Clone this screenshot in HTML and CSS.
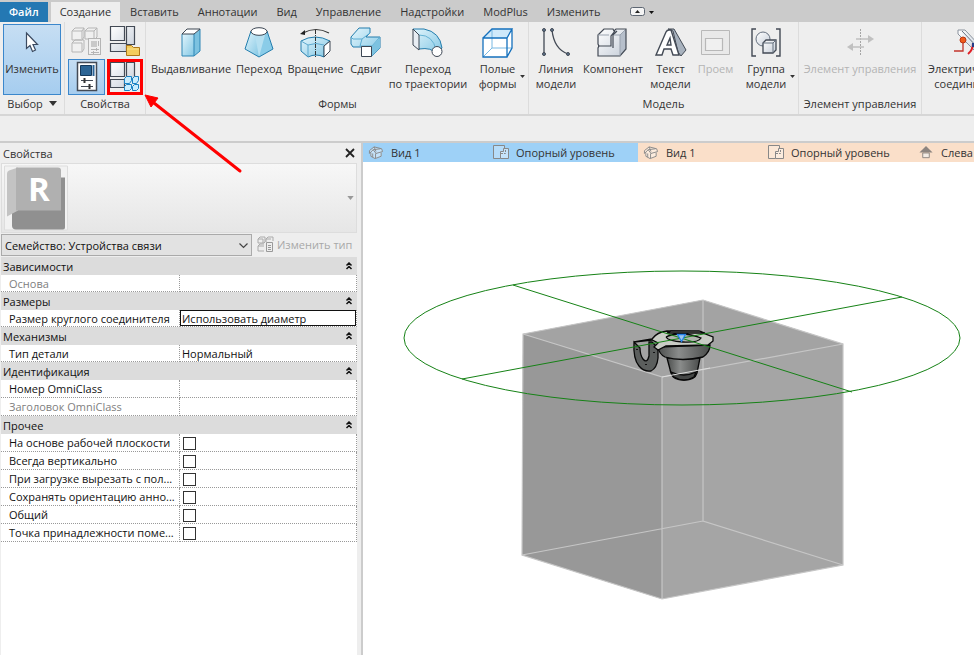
FILE: index.html
```html
<!DOCTYPE html>
<html lang="ru">
<head>
<meta charset="utf-8">
<title>Редактор семейств</title>
<link rel="stylesheet" href="styles.css">
</head>
<body>
<svg class="defs" aria-hidden="true">
  <defs>
    <linearGradient id="blue" x1="0" y1="0" x2="1" y2="1"><stop offset="0" stop-color="#e2f5fc"/><stop offset="1" stop-color="#83c7e4"/></linearGradient>
    <linearGradient id="grey" x1="0" y1="0" x2="1" y2="1"><stop offset="0" stop-color="#ffffff"/><stop offset="1" stop-color="#c6ced9"/></linearGradient>
    <linearGradient id="dome" x1="0" y1="0" x2="1" y2="0"><stop offset="0" stop-color="#4c4e4d"/><stop offset=".4" stop-color="#8a8c8b"/><stop offset="1" stop-color="#4a4c4b"/></linearGradient>
    <symbol id="house" viewBox="0 0 16 16"><path d="M1 6l5-4 8 2 1 3-1 1v4l-7 3-5-3V8z" fill="#fff" fill-opacity=".4"/><path d="M1 6l5-4 8 2 1 3-7 2-3-4-4 4zM2.500 8v4L7 14.500l6.500-2.500V8M7.500 9v5M4.500 9v4M6 2l2 5M5 5l8-1" fill="none" stroke="currentColor"/></symbol>
    <symbol id="plan" viewBox="0 0 16 15"><path d="M7.500 13.500h-7V.500h11v3" fill="#fff" fill-opacity=".25" stroke="currentColor"/><path d="M7.500 6.500h3v-3h5v10h-8z" fill="#fff" fill-opacity=".4" stroke="currentColor"/><path d="M8 8.500h4.500V4" fill="none" stroke="currentColor" stroke-dasharray="2 1"/></symbol>
    <symbol id="chevrons" viewBox="0 0 8 8"><path d="M1.500 3.500L4 1l2.500 2.500M1.500 7L4 4.500 6.500 7" fill="none" stroke="#111" stroke-width="1.500"/></symbol>
    <symbol id="down" viewBox="0 0 8 5"><path d="M0 0h8L4 5z" fill="currentColor"/></symbol>
  </defs>
</svg>

<div class="app">
  <nav class="menu">
    <button class="menu-tab file">Файл</button>
    <button class="menu-tab active">Создание</button>
    <button class="menu-tab">Вставить</button>
    <button class="menu-tab">Аннотации</button>
    <button class="menu-tab">Вид</button>
    <button class="menu-tab">Управление</button>
    <button class="menu-tab">Надстройки</button>
    <button class="menu-tab">ModPlus</button>
    <button class="menu-tab">Изменить</button>
    <button class="menu-toggle" aria-label="Свернуть ленту">
      <svg width="24" height="10" viewBox="0 0 24 10"><rect x=".5" y=".5" width="14" height="8" rx="2" fill="#f4f4f4" stroke="#5d6672"/><path d="M5 6h5L7.500 3z" fill="#222"/><path d="M19 4h5l-2.500 3z" fill="#111"/></svg>
    </button>
  </nav>

  <div class="ribbon">
    <section class="panel select">
      <div class="tools">
        <button class="tool pressed">
          <svg class="icon" viewBox="0 0 32 32"><path d="M10.500 6v15.500l3.500-3 2.500 6 3-1.500-2.500-5.500h4.500z" fill="#fff" stroke="#3b4a60" stroke-width="1.200"/></svg>
          <span>Изменить</span>
        </button>
      </div>
      <h2 class="panel-title">Выбор <svg class="title-arrow"><use href="#down"/></svg></h2>
    </section>

    <section class="panel props">
      <div class="tools">
        <button class="small" aria-label="Свойства типа" disabled>
          <svg class="icon" viewBox="0 0 32 32"><g fill="#f0f0f0" stroke="#b5b5b5"><path d="M1 6l3-3h9v9l-2 3H1zM14 6l3-3h9v9l-2 2H14zM1 18l3-3h9v9l-2 3H1z"/><path d="M1 6h10v9M11 6l2-3M14 6h9v8M23 6l3-3M1 18h10v9"/><rect x="17.500" y="13.500" width="12" height="16"/></g><path d="M20 16h6v6h-6z" fill="#c9c9c9"/><path d="M20 24.500h8M20 27.500h8M25.500 23v3M22.500 26v3M27.500 16v5" stroke="#b5b5b5"/></svg>
        </button>
        <button class="small" aria-label="Категория и параметры семейства">
          <svg class="icon" viewBox="0 0 32 32"><g fill="url(#grey)" stroke="#434a55" stroke-width="1.200"><path d="M1.500 1.500h14v14h-14zM17.500 1.500h8v18h-8zM1.500 18.500h16v8h-16z"/></g><path d="M17.500 20.500h5l2 2h6v8h-13z" fill="#f3cc5c" stroke="#ad7718"/><path d="M18 24h12" stroke="#fbe18d"/></svg>
        </button>
        <button class="small pressed" aria-label="Свойства">
          <svg class="icon" viewBox="0 0 32 32"><rect x="6.500" y="1.500" width="19" height="28" fill="#fff" stroke="#434a55" stroke-width="1.500"/><path d="M9.500 4.500h11v10h-11z" fill="#2c6494" stroke="#15385a"/><path d="M22.500 4v11" stroke="#2a6499" stroke-width="2"/><path d="M10 19.500h12M10 25.500h12" stroke="#434a55"/><path d="M13.500 17v5M18.500 23v5" stroke="#333" stroke-width="2"/></svg>
        </button>
        <button class="small marked" aria-label="Типоразмеры в семействе">
          <svg class="icon" viewBox="0 0 32 32"><g fill="url(#grey)" stroke="#434a55" stroke-width="1.200"><path d="M1.500 1.500h14v14h-14zM17.500 1.500h8v16h-8zM1.500 18.500h14v8h-14z"/></g><g fill="#c9ecfd" stroke="#1781c4"><path d="M15.500 17.500l2-2h5v4l-2 3h-5zM23.500 17.500l2-2h4v4l-2 3h-4zM15.500 25.500l2-2h5v4l-2 2h-5zM23.500 25.500l2-2h4v4l-2 2h-4z"/></g></svg>
        </button>
      </div>
      <h2 class="panel-title">Свойства</h2>
    </section>

    <section class="panel forms">
      <div class="tools">
        <button class="tool">
          <svg class="icon" viewBox="0 0 32 32"><path d="M7 7h12v22H7z" fill="url(#blue)"/><path d="M19 7l6-5v22l-6 5z" fill="#7cc2e0"/><path d="M7 7l5-5h13l-6 5z" fill="#fff"/><path d="M7 7v22h12l6-5V2M19 7v22" fill="none" stroke="#2e86b5"/><path d="M7 7l5-5h13l-6 5z" fill="none" stroke="#3c4653"/></svg>
          <span>Выдавливание</span>
        </button>
        <button class="tool">
          <svg class="icon" viewBox="0 0 32 32"><path d="M8 4L2 22l14 8V8z" fill="url(#blue)"/><path d="M24 4l6 18-14 8V8z" fill="#8accE8"/><path d="M12 8l4 22 6-22z" fill="#b6e0f1"/><path d="M8 4L2 22l14 8 14-8-6-18" fill="none" stroke="#237dad"/><ellipse cx="16" cy="4.500" rx="8" ry="3.800" fill="#fff" stroke="#3c4653"/></svg>
          <span>Переход</span>
        </button>
        <button class="tool">
          <svg class="icon" viewBox="0 0 32 32"><path d="M1 14q14-8 29 0l-6 5v11q-8-4-16 0l-7-6z" fill="url(#blue)" stroke="#237dad"/><path d="M1 14l7 4q8-3 16 0M8 18v12" fill="none" stroke="#5ca9ce"/><path d="M24 19l6-5v10l-6 6z" fill="#fff" stroke="#3c4653"/><path d="M15.500 3v28" stroke="#333" stroke-dasharray="4 1 1 1"/><path d="M3 6q13-7 26 0" fill="none" stroke="#333" stroke-width="1.200"/><path d="M0 7l5-4v5z" fill="#222"/></svg>
          <span>Вращение</span>
        </button>
        <button class="tool">
          <svg class="icon" viewBox="0 0 32 32"><path d="M1 10L9 1h11v5l-4 4h14v11l-8 8H12v-9H3l-2-3z" fill="url(#blue)" stroke="#237dad"/><path d="M1 10l2 2h9l8-6M12 12l-2 7h12l8-9" fill="none" stroke="#5bacd2"/><path d="M22 19l8-8v10l-8 8z" fill="#7cc2e0"/><path d="M11.500 19.500h10v10h-10z" fill="#fff" stroke="#3c4653"/></svg>
          <span>Сдвиг</span>
        </button>
        <button class="tool">
          <svg class="icon" viewBox="0 0 32 32"><path d="M1 2h11q16 3 18 19l-6 6Q20 20 7 22z" fill="url(#blue)" stroke="#237dad"/><path d="M7 8q14 0 17 15" fill="none" stroke="#65b2d4"/><path d="M1 2l6 6v15l-6-5z" fill="#e8edf3" stroke="#3c4653"/><circle cx="25" cy="24.500" r="5" fill="#fff" stroke="#3c4653"/></svg>
          <span>Переход<br>по траектории</span>
        </button>
        <button class="tool drop">
          <svg class="icon" viewBox="0 0 32 32"><path d="M1 11l9-9h20l-5 9z" fill="#cfe9fa"/><path d="M1 11h24v19H1zM25 11l5-9v19l-5 9" fill="#fff"/><path d="M10 2v19h20M10 21l-9 9" fill="none" stroke="#78b9e3"/><path d="M1 11h24v19H1zL10 2h20l-5 9M30 2v19l-5 9" fill="none" stroke="#1470bd" stroke-width="1.300"/></svg>
          <span>Полые<br>формы</span>
          <svg class="drop-arrow"><use href="#down"/></svg>
        </button>
      </div>
      <h2 class="panel-title">Формы</h2>
    </section>

    <section class="panel model">
      <div class="tools">
        <button class="tool">
          <svg class="icon" viewBox="0 0 32 32"><path d="M4 3v24M12 3q2 19 16 24" fill="none" stroke="#434a55" stroke-width="1.300"/><g fill="#5d738c" stroke="#434a55"><circle cx="4" cy="3" r="1.500"/><circle cx="12" cy="3" r="1.500"/><circle cx="4" cy="27" r="1.500"/><circle cx="28" cy="27" r="1.500"/></g></svg>
          <span>Линия<br>модели</span>
        </button>
        <button class="tool">
          <svg class="icon" viewBox="0 0 32 32"><path d="M1 8l6-6h9l1 2 2-2h10v20l-6 7H1V21l1-2-1-2z" fill="url(#grey)"/><path d="M23 8l6-6v20l-6 7z" fill="#b6bfcb"/><path d="M1 8l6-6h9l1 2 2-2h10v20l-6 7H1V21l1-2-1-2zM1 19h13V9l4-5M16 21V8l4-4" fill="none" stroke="#434a55" stroke-width="1.200"/><path d="M1 8h11M17 8h6v21M23 8l5-5" fill="none" stroke="#9aa3af"/></svg>
          <span>Компонент</span>
        </button>
        <button class="tool">
          <svg class="icon" viewBox="0 0 32 32"><path d="M13 2h6l12 21-5 6-3-4-5-21z" fill="#a8b2be" stroke="#434a55"/><path d="M1 28L11 5q1-2 3-2h2l8 25h-6l-2-6H9l-2 6zM12 18h4l-1-7z" fill="#fff" fill-rule="evenodd" stroke="#434a55" stroke-width="1.400"/></svg>
          <span>Текст<br>модели</span>
        </button>
        <button class="tool" disabled>
          <svg class="icon" viewBox="0 0 32 32"><path d="M1.500 3.500h28v24h-28z" fill="#e9e9e9" stroke="#b8b8b8"/><path d="M5.500 11.500h17v12h-17z" fill="#f0f0f0" stroke="#b8b8b8" stroke-width="1.200"/></svg>
          <span>Проем</span>
        </button>
        <button class="tool drop">
          <svg class="icon" viewBox="0 0 32 32"><path d="M6 2H2v27h4M26 2h4v27h-4" fill="none" stroke="#434a55" stroke-width="1.400"/><circle cx="13" cy="12" r="7" fill="url(#grey)" stroke="#65707f"/><path d="M13 16l3-3h10v10l-3 3H13z" fill="url(#grey)" stroke="#434a55" stroke-width="1.300"/><path d="M13 16h10v10M23 16l3-3" fill="none" stroke="#65707f"/></svg>
          <span>Группа<br>модели</span>
          <svg class="drop-arrow"><use href="#down"/></svg>
        </button>
      </div>
      <h2 class="panel-title">Модель</h2>
    </section>

    <section class="panel control">
      <div class="tools">
        <button class="tool" disabled>
          <svg class="icon" viewBox="0 0 32 32"><path d="M16.500 2v27" stroke="#a5a5a5" stroke-dasharray="2 1"/><path d="M12 12h13M7 20h13" stroke="#c0c0c0" stroke-width="1.500"/><path d="M24 8l6 4-6 4zM9 16l-6 4 6 4z" fill="#c0c0c0"/></svg>
          <span>Элемент управления</span>
        </button>
      </div>
      <h2 class="panel-title">Элемент управления</h2>
    </section>

    <section class="panel connect">
      <div class="tools">
        <button class="tool">
          <svg class="icon" viewBox="0 0 32 32"><path d="M5 3h7l16 17-5 5L5 7z" fill="url(#grey)" stroke="#8a929d"/><path d="M9 4l17 18" stroke="#657080"/><path d="M10 14v10H1" fill="none" stroke="#c3342b" stroke-width="1.300"/><circle cx="10" cy="13" r="3" fill="#f05a1a" stroke="#b83613"/><path d="M15 27q5-4 5-11" fill="none" stroke="#e02027" stroke-width="2"/><path d="M20 16v4" stroke="#253c88" stroke-width="2"/></svg>
          <span>Электрический<br>соединитель</span>
        </button>
      </div>
    </section>

    <svg class="pointer" viewBox="0 0 100 82" aria-hidden="true"><path d="M10 9l86 68" stroke="#f00" stroke-width="3" stroke-linecap="round"/><path d="M1 1l13 3-7 9z" fill="#f00" stroke="#f00"/></svg>
  </div>

  <div class="options"></div>

  <main class="workspace">
    <aside class="palette">
      <header class="palette-head">
        <h2>Свойства</h2>
        <button class="close" aria-label="Закрыть"><svg width="10" height="10" viewBox="0 0 10 10"><path d="M1 1l8 8M9 1L1 9" stroke="#222" stroke-width="1.800"/></svg></button>
      </header>
      <button class="type-picker" aria-label="Выбор типа">
        <svg class="thumb" viewBox="0 0 64 65"><path d="M.5.500h63v64H.5z" fill="#f2f2f2" stroke="#ddd"/><path d="M8 42l5-30h48v50q0 2-2 2H12q-4 0-4-4z" fill="#909090"/><path d="M3 8q0-2 2-3l9-3v43L3 51z" fill="#c3c3c3"/><path d="M12 2h42q3 0 3 3v40H12z" fill="#b0b0b0"/><text x="35" y="35" text-anchor="middle">R</text></svg>
        <svg class="picker-arrow"><use href="#down"/></svg>
      </button>
      <div class="family">
        <label class="family-select">
          <select aria-label="Семейство"><option>Семейство: Устройства связи</option></select>
          <svg width="9" height="6" viewBox="0 0 9 6"><path d="M.5.500l4 4 4-4" fill="none" stroke="#444" stroke-width="1.200"/></svg>
        </label>
        <button class="edit-type" disabled>
          <svg width="17" height="17" viewBox="0 0 17 17"><path d="M1 3l2-2h5v5L7 7H1zM9 3l2-2h5v4M1 3h5v4M9 3h5M9 3v3M1 10l2-2h4M1 10v5h6M1 10h6" fill="none" stroke="#aaa"/><path d="M9.500 6.500h6v9h-6zM11 9.500h3M11 11.500h3M11 13.500h3" fill="none" stroke="#999"/></svg>
          Изменить тип
        </button>
      </div>

      <table class="grid">
        <colgroup><col class="col-name"><col></colgroup>
        <tbody>
          <tr><th colspan="2"><span class="group">Зависимости <svg><use href="#chevrons"/></svg></span></th></tr>
          <tr class="muted"><td>Основа</td><td></td></tr>
        </tbody>
        <tbody>
          <tr><th colspan="2"><span class="group">Размеры <svg><use href="#chevrons"/></svg></span></th></tr>
          <tr><td><label for="round">Размер круглого соединителя</label></td><td><input class="value current" id="round" type="text" value="Использовать диаметр"></td></tr>
        </tbody>
        <tbody>
          <tr><th colspan="2"><span class="group">Механизмы <svg><use href="#chevrons"/></svg></span></th></tr>
          <tr><td><label for="part">Тип детали</label></td><td><input class="value" id="part" type="text" value="Нормальный"></td></tr>
        </tbody>
        <tbody class="roomy">
          <tr><th colspan="2"><span class="group">Идентификация <svg><use href="#chevrons"/></svg></span></th></tr>
          <tr><td><label for="omni">Номер OmniClass</label></td><td><input class="value" id="omni" type="text"></td></tr>
          <tr class="muted"><td>Заголовок OmniClass</td><td></td></tr>
        </tbody>
        <tbody class="roomy">
          <tr><th colspan="2"><span class="group">Прочее <svg><use href="#chevrons"/></svg></span></th></tr>
          <tr><td><label for="f1">На основе рабочей плоскости</label></td><td><input id="f1" type="checkbox"></td></tr>
          <tr><td><label for="f2">Всегда вертикально</label></td><td><input id="f2" type="checkbox"></td></tr>
          <tr><td><label for="f3">При загрузке вырезать с пол...</label></td><td><input id="f3" type="checkbox"></td></tr>
          <tr><td><label for="f4">Сохранять ориентацию анно...</label></td><td><input id="f4" type="checkbox"></td></tr>
          <tr><td><label for="f5">Общий</label></td><td><input id="f5" type="checkbox"></td></tr>
          <tr><td><label for="f6">Точка принадлежности поме...</label></td><td><input id="f6" type="checkbox"></td></tr>
        </tbody>
      </table>
    </aside>

    <section class="views">
      <nav class="view-tabs">
        <button class="view-tab short first"><svg><use href="#house"/></svg>Вид 1</button>
        <button class="view-tab first"><svg><use href="#plan"/></svg>Опорный уровень</button>
        <button class="view-tab short"><svg><use href="#house"/></svg>Вид 1</button>
        <button class="view-tab"><svg><use href="#plan"/></svg>Опорный уровень</button>
        <button class="view-tab"><svg viewBox="0 0 16 16"><path d="M8 1l7 7H1z" fill="#8d8580"/><path d="M4.500 8.500h7v5h-7z" fill="#f3ebe4" stroke="#8d8580"/></svg>Слева</button>
      </nav>
      <svg class="scene" viewBox="363 162 611 493" preserveAspectRatio="xMinYMin meet" role="img" aria-label="3D вид">
        <path d="M523 334l180-34 140 44v221l-181 34-140-44z" fill="#a5a5a5"/>
        <path d="M523 334l139 43v222l-140-44z" fill="#989898"/>
        <path d="M523 334l180-34 140 44-181 33z" fill="#a3a3a3"/>
        <path d="M523 334l180-34 140 44v221l-181 34-140-44zM703 300v221l140 44M703 521l-181 34M523 334l139 43v222M662 377l181-33" fill="none" stroke="#c6c6c6" stroke-width="1.200"/>
        <g fill="#5b5e5d" stroke="#080808" stroke-width="1.300">
          <path d="M667 358l4 15q2 7 13 7t13-7l3-15z" fill="url(#dome)"/>
          <path d="M671 372q13 6 25 0l-2 5q-10 6-20 0z" fill="#454746"/>
          <path d="M658 347q1 7 7 10 17 5 38 0 7-5 7-12z" fill="url(#dome)"/>
          <path d="M634 342q-1 17 5 24 5 6 12 5 6-3 7-13v-10l-6-6h-3v14q-2 8-6 3-3-4-3-11z"/>
          <path d="M634 342l18-3q5-7 15-8l33 1 13 5v4l-5 4-42 1-8 4-4-3 4-4-6-3z" fill="#c9ccc5"/>
          <path d="M667 333l38 0-6-2h-28zM666 337q5-3 15-3t20 4q-3 5-18 4t-17-5" fill="#b0b3ad"/>
        </g>
        <path d="M637 349v1M654 352v1M646 364v1" stroke="#111" stroke-width="2"/>
        <g fill="none" stroke="#168216"><ellipse cx="682" cy="338" rx="278" ry="67"/><path d="M513 285l339 107M902 297L462 379"/></g>
        <path d="M677.500 334.500h8l-4 7z" fill="#9cc7ef" stroke="#2580e8" stroke-width="1.300"/>
        <path d="M662 377l48-9" stroke="#ddd"/>
      </svg>
    </section>
  </main>
</div>
</body>
</html>
```
FILE: styles.css
```css
* { box-sizing: border-box; }

body {
  margin: 0;
  font: 11px/15px "Open Sans", "Noto Sans", sans-serif;
  color: #333;
  background: #eee;
}

button, input, select { font: inherit; color: inherit; margin: 0; }
button { padding: 0; border: 0; background: none; white-space: nowrap; }
h2 { margin: 0; font-size: inherit; font-weight: 400; }
svg { flex: none; }
.defs { position: absolute; width: 0; height: 0; }

.app { display: flex; flex-direction: column; min-height: 100vh; overflow: hidden; }

.menu { display: flex; align-items: stretch; gap: 1px; height: 22px; padding-top: 2px; background: #cbcbcb; }
.menu-tab { padding: 0 9px 2px; }
.menu-tab.file { margin-right: 2px; background: #2478b3; color: #fff; font-weight: 600; }
.menu-tab.active { background: #eee; }
.menu-toggle { display: flex; align-items: center; margin-left: 20px; }

.ribbon { position: relative; display: flex; border-bottom: 2px solid #d6d6d6; background: #eee; }
.panel { flex: none; display: flex; flex-direction: column; padding: 2px 3px 3px; border-right: 1px solid #dcdcdc; }
.panel-title { padding-top: 1px; text-align: center; }
.title-arrow { width: 8px; height: 5px; margin: 0 0 2px 3px; }
.tools { display: grid; height: 71px; }
.tool { position: relative; display: flex; flex-direction: column; align-items: center; gap: 2px; padding-top: 3px; }
.icon { width: 32px; height: 32px; }
.tool:disabled { color: #b4b4b4; }
.drop-arrow { position: absolute; right: 1px; bottom: 17px; width: 5px; height: 3px; }
.pressed { background: linear-gradient(#c6def3, #a6cdef); border: 1px solid #3b87cc; }
.tool.pressed { padding-top: 2px; }

.select { width: 65px; }
.props { width: 81px; }
.props .tools { grid-template-columns: 37px 36px; grid-template-rows: 34px 36px; gap: 1px 2px; }
.small { display: flex; align-items: center; justify-content: center; }
.marked { border: 3px solid #f00; }
.forms { width: 383px; padding-left: 4px; }
.forms .tools { grid-template-columns: 82px 54px 59px 42px 82px 57px; }
.model { width: 270px; }
.model .tools { grid-template-columns: 48px 66px 49px 41px 60px; }
.control { width: 123px; }
.connect { border-right: 0; }
.connect .tools { grid-template-columns: 88px; }

.pointer { position: absolute; left: 144px; top: 72px; width: 100px; height: 82px; z-index: 2; fill: none; pointer-events: none; }
.options { height: 25px; }

.workspace { flex: 1; display: flex; border-top: 2px solid #ccc; }
.palette { flex: none; width: 363px; display: flex; flex-direction: column; padding: 0 4px 0 1px; border-right: 2px solid #ccc; background: #eee; }
.palette-head { display: flex; align-items: center; justify-content: space-between; height: 20px; padding: 0 2px; }
.close { display: flex; }
.type-picker { display: flex; align-items: center; justify-content: space-between; height: 70px; padding: 1px 2px; border: 1px solid #ddd; background: linear-gradient(#f7f7f7, #e6e6e6); }
.thumb { width: 64px; height: 66px; }
.thumb text { font: 700 33px "Open Sans", sans-serif; fill: #fff; }
.picker-arrow { width: 7px; height: 4px; color: #999; }
.family { display: flex; gap: 5px; height: 24px; padding-top: 1px; }
.family-select { position: relative; width: 251px; height: 22px; }
.family-select select { width: 100%; height: 100%; padding: 0 3px; border: 1px solid #aaa; border-radius: 0; appearance: none; background: #e2e2e2; color: #111; }
.family-select svg { position: absolute; right: 4px; top: 9px; }
.edit-type { display: flex; align-items: center; gap: 3px; height: 20px; color: #a8a8a8; }

.grid { table-layout: fixed; width: 100%; border-collapse: separate; border-spacing: 0; background: #fff; color: #111; }
.palette::after { content: ""; flex: 1; background: #fff; }
.col-name { width: 179px; }
.grid th { height: 18px; padding: 0 4px 0 2px; background: #dcdcdc; font-weight: 400; text-align: left; }
.group { display: flex; align-items: center; justify-content: space-between; }
.group svg { width: 8px; height: 8px; }
.grid td { height: 17px; padding: 0 0 0 8px; border-right: 1px dotted #999; border-bottom: 1px dotted #999; line-height: 15px; white-space: nowrap; }
.grid td + td { padding: 0; }
.roomy td { height: 18px; }
.muted { color: #808080; }
.value { display: block; width: 100%; height: 16px; padding: 0 2px; border: 0; background: #fff; outline: 0; }
.current { padding: 0 1px; border: 1px solid #111; }
.grid input[type="checkbox"] { display: block; width: 13px; height: 13px; margin: 2px 0 0 3px; appearance: none; border: 1px solid #333; background: #fff; }

.views { flex: 1; min-width: 0; display: flex; flex-direction: column; background: #fff; }
.view-tabs { display: flex; height: 19px; overflow: hidden; background: #fadfc9; color: #333; }
.view-tab { flex: none; display: flex; align-items: center; gap: 7px; width: 150px; padding-left: 5px; }
.view-tab.short { width: 125px; }
.view-tab.first { background: #9ed1f7; }
.view-tab svg { width: 16px; height: 15px; color: #888; }
.scene { flex: 1; min-height: 0; width: 100%; }
```
